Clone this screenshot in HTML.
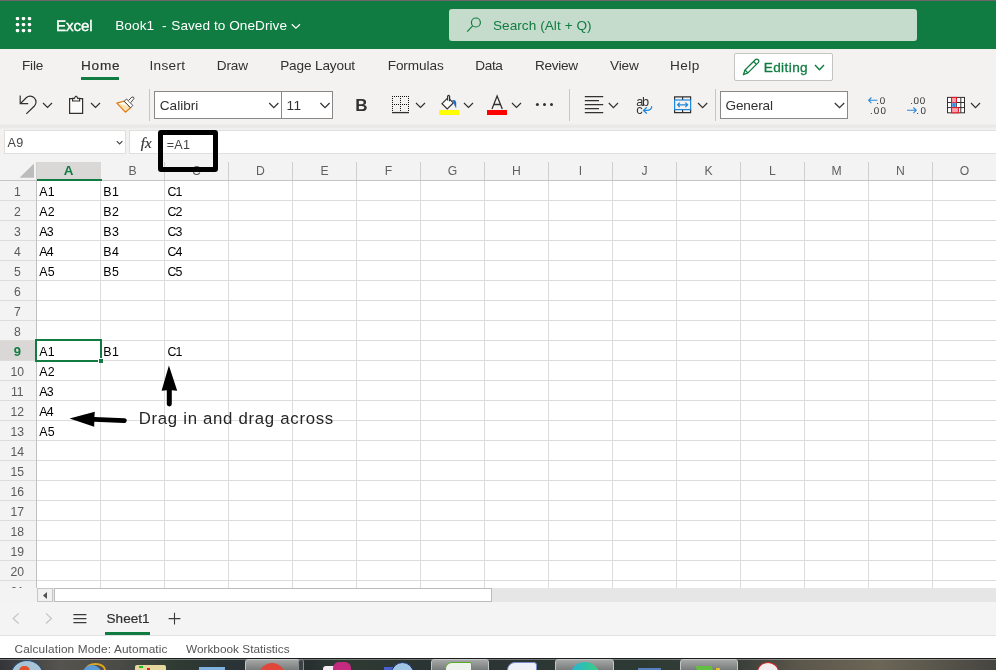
<!DOCTYPE html>
<html lang="en">
<head>
<meta charset="utf-8">
<title>Book1.xlsx - Excel</title>
<style>
html,body{margin:0;padding:0}
body{width:996px;height:670px;overflow:hidden;position:relative;background:#f3f2f1;font-family:"Liberation Sans",sans-serif;color:#323130}
.a{position:absolute}
.gl{position:absolute;left:0;top:0;width:996px;height:670px;will-change:transform}
.cells{position:absolute;left:0;top:0}
.t{position:absolute;white-space:pre;line-height:1;color:#323130}
#topline{left:0;top:0;width:996px;height:1px;background:#70656b}
#header{left:0;top:1px;width:996px;height:48px;background:#107c41}
#search{left:449px;top:9px;width:468px;height:32px;background:#c5dccd;border-radius:3px}
#ribbon{left:0;top:49px;width:996px;height:76px;background:#f3f2f1}
#ribshadow{left:0;top:124px;width:996px;height:6px;background:linear-gradient(#f1f0ef,#e7e6e5 35%,#eeedec 70%,#f3f3f3)}
#homeul{left:81px;top:77px;width:38px;height:3px;background:#107c41}
#editbtn{left:734px;top:53px;width:97px;height:26px;background:#fff;border:1px solid #c6c4c2;border-radius:2px}
.sep{width:1px;background:#c8c6c4;top:89px;height:32px}
.box{background:#fff;border:1px solid #8a8886;box-sizing:border-box}
#namebox{left:4px;top:130px;width:122px;height:24px;background:#fff;border:1px solid #e1dfdd;box-sizing:border-box}
#fxbox{left:129px;top:130px;width:870px;height:24px;background:#fff;border:1px solid #e1dfdd;box-sizing:border-box}
#colhdr{left:0;top:154px;width:996px;height:26px;background:#f3f3f3}
#colhdr i{position:absolute;top:8px;width:1px;height:18px;background:#cfcfcf}
#colA{left:37px;top:162px;width:64px;height:17px;background:#d9d8d6}
#colAline{left:37px;top:179px;width:65px;height:2px;background:#107c41}
#hdrline{left:0;top:180px;width:996px;height:1px;background:#c6c6c6}
#rowhdr{left:0;top:181px;width:36px;height:407px;background-color:#f3f3f3;background-image:linear-gradient(transparent 19px,#dcdcdc 19px);background-size:100% 20px}
#row9{left:0;top:341px;width:36px;height:19px;background:#d9d8d6}
#rowline{left:36px;top:181px;width:1px;height:407px;background:#c0c0c0}
#grid{left:37px;top:181px;width:959px;height:407px;background-color:#fff;background-image:linear-gradient(transparent 19px,#dcdcdc 19px),linear-gradient(90deg,transparent 63px,#dcdcdc 63px);background-size:100% 20px,64px 100%}
#sel{left:35px;top:339px;width:63px;height:19px;border:2px solid #107c41}
#handle{left:98px;top:358px;width:4px;height:4px;background:#107c41;border:1px solid #fff;border-right:0;border-bottom:0}
#annbox{left:158px;top:130px;width:50px;height:32px;border:5px solid #000;border-radius:3px}
#hscroll{left:37px;top:588px;width:959px;height:14px;background:#e6e6e6}
#hsbtn{left:37px;top:588px;width:16px;height:14px;background:#f1f1f1;border:1px solid #c6c6c6;box-sizing:border-box}
#hsthumb{left:54px;top:588px;width:438px;height:14px;background:#fff;border:1px solid #bcbcbc;box-sizing:border-box}
#tabs{left:0;top:602px;width:996px;height:33px;background:#f4f4f4}
#tabul{left:105px;top:632px;width:45px;height:3px;background:#107c41}
#statline{left:0;top:635px;width:996px;height:1px;background:#e1e1e1}
#status{left:0;top:636px;width:996px;height:22px;background:#fff}
#taskbar{left:0;top:658px;width:996px;height:12px;overflow:hidden;background:linear-gradient(90deg,#34353a 0,#55544f 60px,#4a4a46 120px,#2f3b33 175px,#2a3236 240px,#27302f 310px,#303b33 340px,#2a3433 420px,#2c3534 500px,#2d3a34 640px,#3a3f3a 740px,#5c574b 800px,#6b6656 880px,#55524a 950px,#45443f 996px)}
#taskbar:before{content:"";position:absolute;left:0;top:0;width:996px;height:2px;background:linear-gradient(#1c1c1c 50%,rgba(255,255,255,.35) 50%)}
#taskbar i{position:absolute;display:block}
.tbb{top:1px;height:14px;border:1px solid #c2c5c6;border-radius:3px;background:linear-gradient(#a4a7a6,#6f7372);box-sizing:border-box}
svg{position:absolute;overflow:visible}
</style>
</head>
<body>
<div class="a" id="header"></div>
<div class="a" id="topline"></div>
<div class="a" id="search"></div>
<div class="a" id="ribbon"></div>
<div class="a" id="ribshadow"></div>
<div class="a" id="homeul"></div>
<div class="a" id="editbtn"></div>
<div class="a sep" style="left:149px"></div>
<div class="a sep" style="left:569px"></div>
<div class="a sep" style="left:715px"></div>
<div class="a box" style="left:154px;top:91px;width:128px;height:28px"></div>
<div class="a box" style="left:281px;top:91px;width:52px;height:28px"></div>
<div class="a box" style="left:720px;top:91px;width:128px;height:28px"></div>
<div class="a" id="namebox"></div>
<div class="a" id="fxbox"></div>
<div class="a" id="colhdr">
<i style="left:36px"></i><i style="left:100px"></i><i style="left:164px"></i><i style="left:228px"></i><i style="left:292px"></i><i style="left:356px"></i><i style="left:420px"></i><i style="left:484px"></i><i style="left:548px"></i><i style="left:612px"></i><i style="left:676px"></i><i style="left:740px"></i><i style="left:804px"></i><i style="left:868px"></i><i style="left:932px"></i>
</div>
<div class="a" id="colA"></div>
<div class="a" id="hdrline"></div>
<div class="a" id="colAline"></div>
<div class="a" id="rowhdr"></div>
<div class="a" id="row9"></div>
<div class="a" id="grid"></div>
<div class="a" id="rowline"></div>
<div class="a" id="hscroll"></div>
<div class="a" id="hsbtn"></div>
<div class="a" id="hsthumb"></div>
<div class="a" id="tabs"></div>
<div class="a" id="tabul"></div>
<div class="a" id="status"></div>
<div class="a" id="statline"></div>
<div class="a" id="taskbar">
<i class="tbb" style="left:245px;width:55px"></i><i class="tbb" style="left:298px;width:6px;background:#3a4044;border-color:#8a8d8e"></i>
<i class="tbb" style="left:431px;width:58px"></i>
<i class="tbb" style="left:555px;width:59px"></i>
<i class="tbb" style="left:680px;width:58px"></i>
<i style="left:10px;top:2px;width:34px;height:34px;border-radius:50%;background:#a9c3d6;border:1px solid #1d4f7a;box-sizing:border-box"></i>
<i style="left:19px;top:8px;width:11px;height:10px;border-radius:5px 5px 0 0;background:#e2502a"></i>
<i style="left:85px;top:5px;width:21px;height:14px;border-radius:50%;border:2px solid #e0a820;box-sizing:border-box"></i>
<i style="left:82px;top:7px;width:20px;height:20px;border-radius:50%;background:#5a9ad8"></i>
<i style="left:135px;top:7px;width:31px;height:10px;border-radius:2px;background:#e6d79c"></i>
<i style="left:139px;top:8px;width:4px;height:2px;background:#18c030"></i><i style="left:147px;top:10px;width:3px;height:2px;background:#d82818"></i>
<i style="left:199px;top:9px;width:26px;height:6px;background:#7fb2e0"></i>
<i style="left:259px;top:5px;width:26px;height:26px;border-radius:50%;background:#e0473a"></i>
<i style="left:323px;top:8px;width:18px;height:8px;border-radius:3px;background:#f4eef2"></i>
<i style="left:333px;top:4px;width:18px;height:10px;border-radius:6px 6px 0 0;background:#c42a80"></i>
<i style="left:384px;top:9px;width:9px;height:5px;background:#4a5fd0"></i>
<i style="left:391px;top:4px;width:23px;height:23px;border-radius:50%;background:#9fc4e4;border:1px solid #1a2a6a;box-sizing:border-box"></i>
<i style="left:445px;top:4px;width:27px;height:14px;border-radius:7px 2px 0 0;background:#eef2ec;border:1px solid #5aaa2a;box-sizing:border-box"></i>
<i style="left:507px;top:4px;width:30px;height:14px;border-radius:8px 3px 0 0;background:#eef0f8;border:1px solid #7a8cc8;box-sizing:border-box"></i>
<i style="left:570px;top:4px;width:30px;height:30px;border-radius:50%;background:linear-gradient(90deg,#25b2dc,#3cd07a)"></i>
<i style="left:638px;top:10px;width:23px;height:4px;background:#5a7fc0"></i>
<i style="left:697px;top:8px;width:16px;height:8px;background:#62c040;transform:skewX(20deg)"></i><i style="left:716px;top:10px;width:4px;height:4px;background:#e8c020"></i>
<i style="left:757px;top:4px;width:22px;height:20px;border-radius:50%;background:#f2eeee;border:1px solid #d02020;box-sizing:border-box"></i>
</div>
<div class="gl">
<span class="t" style="left:56.0px;top:19px;font-size:15.2px;-webkit-text-stroke:0.35px currentColor;color:#fff;letter-spacing:-0.11px;text-rendering:geometricPrecision;">Excel</span>
<span class="t" style="left:115.2px;top:19px;font-size:13.6px;color:#fff;letter-spacing:0.11px;">Book1</span>
<span class="t" style="left:161.9px;top:19px;font-size:13.6px;color:#fff;">-</span>
<span class="t" style="left:171.3px;top:19px;font-size:13.6px;color:#fff;letter-spacing:0.05px;">Saved to OneDrive</span>
<span class="t" style="left:492.9px;top:19px;font-size:13.6px;color:#107c41;letter-spacing:0.06px;">Search (Alt + Q)</span>
<span class="t" style="left:22.0px;top:59px;font-size:13.6px;letter-spacing:-0.20px;">File</span>
<span class="t" style="left:80.9px;top:59px;font-size:13.6px;-webkit-text-stroke:0.2px currentColor;letter-spacing:0.84px;">Home</span>
<span class="t" style="left:149.4px;top:59px;font-size:13.6px;letter-spacing:0.34px;">Insert</span>
<span class="t" style="left:216.8px;top:59px;font-size:13.6px;letter-spacing:-0.18px;">Draw</span>
<span class="t" style="left:280.2px;top:59px;font-size:13.6px;letter-spacing:-0.14px;">Page Layout</span>
<span class="t" style="left:387.7px;top:59px;font-size:13.6px;letter-spacing:-0.09px;">Formulas</span>
<span class="t" style="left:475.3px;top:59px;font-size:13.6px;letter-spacing:-0.37px;">Data</span>
<span class="t" style="left:535.0px;top:59px;font-size:13.6px;letter-spacing:-0.32px;">Review</span>
<span class="t" style="left:610.0px;top:59px;font-size:13.6px;letter-spacing:-0.17px;">View</span>
<span class="t" style="left:670.1px;top:59px;font-size:13.6px;letter-spacing:0.38px;">Help</span>
<span class="t" style="left:763.7px;top:61px;font-size:13.6px;-webkit-text-stroke:0.3px currentColor;color:#107c41;letter-spacing:0.40px;">Editing</span>
<span class="t" style="left:159.8px;top:99px;font-size:13.6px;letter-spacing:-0.01px;">Calibri</span>
<span class="t" style="left:286.5px;top:99px;font-size:13.6px;letter-spacing:0.47px;">11</span>
<span class="t" style="left:355.2px;top:97px;font-size:17px;font-weight:700;">B</span>
<span class="t" style="left:725.5px;top:99px;font-size:13.6px;letter-spacing:-0.15px;">General</span>
<span class="t" style="left:7.5px;top:137px;font-size:12.6px;color:#444;letter-spacing:0.29px;">A9</span>
<span class="t" style="left:140.7px;top:136px;font-size:15px;-webkit-text-stroke:0.2px currentColor;font-style:italic;font-family:'Liberation Serif',serif;color:#333;letter-spacing:0.07px;">fx</span>
<span class="t" style="left:166.7px;top:139px;font-size:12.6px;color:#444;letter-spacing:0.32px;">=A1</span>
<span class="t" style="left:63.7px;top:164px;font-size:13.4px;font-weight:700;color:#107c41;">A</span>
<span class="t" style="left:128.4px;top:165px;font-size:12.2px;color:#616161;">B</span>
<span class="t" style="left:192.1px;top:165px;font-size:12.2px;color:#616161;">C</span>
<span class="t" style="left:256.1px;top:165px;font-size:12.2px;color:#616161;">D</span>
<span class="t" style="left:320.4px;top:165px;font-size:12.2px;color:#616161;">E</span>
<span class="t" style="left:384.8px;top:165px;font-size:12.2px;color:#616161;">F</span>
<span class="t" style="left:447.8px;top:165px;font-size:12.2px;color:#616161;">G</span>
<span class="t" style="left:512.1px;top:165px;font-size:12.2px;color:#616161;">H</span>
<span class="t" style="left:578.8px;top:165px;font-size:12.2px;color:#616161;">I</span>
<span class="t" style="left:641.5px;top:165px;font-size:12.2px;color:#616161;">J</span>
<span class="t" style="left:704.4px;top:165px;font-size:12.2px;color:#616161;">K</span>
<span class="t" style="left:769.1px;top:165px;font-size:12.2px;color:#616161;">L</span>
<span class="t" style="left:831.4px;top:165px;font-size:12.2px;color:#616161;">M</span>
<span class="t" style="left:896.1px;top:165px;font-size:12.2px;color:#616161;">N</span>
<span class="t" style="left:959.8px;top:165px;font-size:12.2px;color:#616161;">O</span>
<span class="t" style="left:13.9px;top:186px;font-size:12.2px;color:#5a5a5a;">1</span>
<span class="t" style="left:13.9px;top:206px;font-size:12.2px;color:#5a5a5a;">2</span>
<span class="t" style="left:13.9px;top:226px;font-size:12.2px;color:#5a5a5a;">3</span>
<span class="t" style="left:13.9px;top:246px;font-size:12.2px;color:#5a5a5a;">4</span>
<span class="t" style="left:13.9px;top:266px;font-size:12.2px;color:#5a5a5a;">5</span>
<span class="t" style="left:13.9px;top:286px;font-size:12.2px;color:#5a5a5a;">6</span>
<span class="t" style="left:13.9px;top:306px;font-size:12.2px;color:#5a5a5a;">7</span>
<span class="t" style="left:13.9px;top:326px;font-size:12.2px;color:#5a5a5a;">8</span>
<span class="t" style="left:13.7px;top:345px;font-size:13px;font-weight:700;color:#107c41;">9</span>
<span class="t" style="left:10.5px;top:366px;font-size:12.2px;color:#5a5a5a;">10</span>
<span class="t" style="left:11.0px;top:386px;font-size:12.2px;color:#5a5a5a;">11</span>
<span class="t" style="left:10.5px;top:406px;font-size:12.2px;color:#5a5a5a;">12</span>
<span class="t" style="left:10.5px;top:426px;font-size:12.2px;color:#5a5a5a;">13</span>
<span class="t" style="left:10.5px;top:446px;font-size:12.2px;color:#5a5a5a;">14</span>
<span class="t" style="left:10.5px;top:466px;font-size:12.2px;color:#5a5a5a;">15</span>
<span class="t" style="left:10.5px;top:486px;font-size:12.2px;color:#5a5a5a;">16</span>
<span class="t" style="left:10.5px;top:506px;font-size:12.2px;color:#5a5a5a;">17</span>
<span class="t" style="left:10.5px;top:526px;font-size:12.2px;color:#5a5a5a;">18</span>
<span class="t" style="left:10.5px;top:546px;font-size:12.2px;color:#5a5a5a;">19</span>
<span class="t" style="left:10.5px;top:566px;font-size:12.2px;color:#5a5a5a;">20</span>
<span class="t" style="left:10.5px;top:586px;font-size:12.2px;color:#5a5a5a;">21</span>
<span class="t" style="left:636.3px;top:96px;font-size:12.8px;letter-spacing:-1.33px;">ab</span>
<span class="t" style="left:636.3px;top:104px;font-size:12.8px;">c</span>
<span class="t" style="left:876.3px;top:97px;font-size:9.8px;letter-spacing:0.73px;text-rendering:geometricPrecision;">.0</span>
<span class="t" style="left:869.9px;top:107px;font-size:9.8px;letter-spacing:1.24px;text-rendering:geometricPrecision;">.00</span>
<span class="t" style="left:910.2px;top:97px;font-size:9.8px;letter-spacing:0.64px;text-rendering:geometricPrecision;">.00</span>
<span class="t" style="left:916.3px;top:107px;font-size:9.8px;letter-spacing:1.43px;text-rendering:geometricPrecision;">.0</span>
<span class="t" style="left:138.7px;top:411px;font-size:16.8px;color:#262626;letter-spacing:0.70px;">Drag in and drag across</span>
<span class="t" style="left:106.5px;top:612px;font-size:13.6px;-webkit-text-stroke:0.2px currentColor;">Sheet1</span>
<span class="t" style="left:14.5px;top:644px;font-size:11.8px;color:#555;letter-spacing:0.13px;">Calculation Mode: Automatic</span>
<span class="t" style="left:186.0px;top:644px;font-size:11.8px;color:#555;letter-spacing:0.01px;">Workbook Statistics</span>
</div>
<div class="cells">
<span class="t" style="left:39.3px;top:186px;font-size:12.4px;color:#000;letter-spacing:0.24px;">A1</span>
<span class="t" style="left:103.3px;top:186px;font-size:12.4px;color:#000;letter-spacing:0.44px;">B1</span>
<span class="t" style="left:167.5px;top:186px;font-size:12.4px;color:#000;letter-spacing:-0.84px;">C1</span>
<span class="t" style="left:39.3px;top:206px;font-size:12.4px;color:#000;letter-spacing:0.24px;">A2</span>
<span class="t" style="left:103.3px;top:206px;font-size:12.4px;color:#000;letter-spacing:0.44px;">B2</span>
<span class="t" style="left:167.5px;top:206px;font-size:12.4px;color:#000;letter-spacing:-0.84px;">C2</span>
<span class="t" style="left:39.3px;top:226px;font-size:12.4px;color:#000;letter-spacing:-0.76px;">A3</span>
<span class="t" style="left:103.3px;top:226px;font-size:12.4px;color:#000;letter-spacing:0.44px;">B3</span>
<span class="t" style="left:167.5px;top:226px;font-size:12.4px;color:#000;letter-spacing:-0.84px;">C3</span>
<span class="t" style="left:39.3px;top:246px;font-size:12.4px;color:#000;letter-spacing:-0.76px;">A4</span>
<span class="t" style="left:103.3px;top:246px;font-size:12.4px;color:#000;letter-spacing:0.44px;">B4</span>
<span class="t" style="left:167.5px;top:246px;font-size:12.4px;color:#000;letter-spacing:-0.84px;">C4</span>
<span class="t" style="left:39.3px;top:266px;font-size:12.4px;color:#000;letter-spacing:0.24px;">A5</span>
<span class="t" style="left:103.3px;top:266px;font-size:12.4px;color:#000;letter-spacing:0.44px;">B5</span>
<span class="t" style="left:167.5px;top:266px;font-size:12.4px;color:#000;letter-spacing:-0.84px;">C5</span>
<span class="t" style="left:39.3px;top:346px;font-size:12.4px;color:#000;letter-spacing:0.24px;">A1</span>
<span class="t" style="left:103.3px;top:346px;font-size:12.4px;color:#000;letter-spacing:0.44px;">B1</span>
<span class="t" style="left:167.5px;top:346px;font-size:12.4px;color:#000;letter-spacing:-0.84px;">C1</span>
<span class="t" style="left:39.3px;top:366px;font-size:12.4px;color:#000;letter-spacing:0.24px;">A2</span>
<span class="t" style="left:39.3px;top:386px;font-size:12.4px;color:#000;letter-spacing:-0.76px;">A3</span>
<span class="t" style="left:39.3px;top:406px;font-size:12.4px;color:#000;letter-spacing:-0.76px;">A4</span>
<span class="t" style="left:39.3px;top:426px;font-size:12.4px;color:#000;letter-spacing:0.24px;">A5</span>
</div>
<div class="a" style="left:0;top:588px;width:37px;height:14px;background:#f3f3f3"></div>
<div class="a" id="sel"></div>
<div class="a" id="handle"></div>
<svg class="a" style="left:0;top:0" width="996" height="670" viewBox="0 0 996 670" fill="none" stroke-linecap="butt" stroke-linejoin="miter">
<!-- waffle -->
<g fill="#fff">
<rect x="15.7" y="17" width="3.6" height="3.2" rx="1.4"/><rect x="21.7" y="17" width="3.6" height="3.2" rx="1.4"/><rect x="27.7" y="17" width="3.6" height="3.2" rx="1.4"/>
<rect x="15.7" y="23" width="3.6" height="3.2" rx="1.4"/><rect x="21.7" y="23" width="3.6" height="3.2" rx="1.4"/><rect x="27.7" y="23" width="3.6" height="3.2" rx="1.4"/>
<rect x="15.7" y="29" width="3.6" height="3.2" rx="1.4"/><rect x="21.7" y="29" width="3.6" height="3.2" rx="1.4"/><rect x="27.7" y="29" width="3.6" height="3.2" rx="1.4"/>
</g>
<!-- title chevron -->
<path d="M291.8 24.2 L295.9 28.2 L300 24.2" stroke="#fff" stroke-width="1.2"/>
<!-- search icon -->
<g stroke="#107c41" stroke-width="1.2"><circle cx="475.9" cy="22.5" r="4.5"/><path d="M472.6 25.9 L467.2 31.6"/></g>
<!-- editing pencil + chevron -->
<g stroke="#107c41" stroke-width="1.3" stroke-linejoin="round">
<path d="M743.4 74.7 L745 70 L755.3 59.7 A2.05 2.05 0 0 1 758.2 62.6 L747.9 72.9 Z"/>
<path d="M745 70 L747.9 72.9 M753.5 61.5 L756.4 64.4"/>
<path d="M815 65 L819.5 69.7 L824 65" stroke-width="1.4"/>
</g>
<!-- toolbar icons -->
<g stroke="#323130" stroke-width="1.2">
<!-- undo -->
<path d="M20.2 95.6 V103.7 H28.2"/>
<path d="M20.5 103.5 L26.2 97.8 A5.8 5.8 0 0 1 34.4 106 L26.3 113.9"/>
<!-- chevrons -->
<path d="M43 103 L47.5 107.5 L52 103"/>
<path d="M91 103 L95.5 107.5 L100 103"/>
<path d="M269.2 103 L273.8 107.6 L278.4 103"/>
<path d="M320.4 103 L325 107.6 L329.6 103"/>
<path d="M416 103 L420.5 107.5 L425 103"/>
<path d="M464 103 L468.5 107.5 L473 103"/>
<path d="M512 103 L516.5 107.5 L521 103"/>
<path d="M608.8 103 L613.4 107.6 L618 103"/>
<path d="M698 103 L702.6 107.6 L707.2 103"/>
<path d="M834.8 103 L839.5 107.7 L844.2 103"/>
<path d="M971 103 L975.5 107.6 L980 103"/>
<!-- clipboard -->
<path d="M69.6 98.6 H82.6 V113.4 H69.6 Z" fill="#fbfbfb"/>
<path d="M72.6 101 V98.4 H74.4 Q76.1 93.8 77.8 98.4 H79.6 V101 Z" fill="#f3f2f1"/>
<!-- borders -->
<path d="M392 112.6 H409" stroke-width="1.3"/>
<g stroke-width="1" stroke-dasharray="1 1" stroke="#111">
<path d="M392 96.5 H409 M392 104.5 H409"/>
<path d="M392.5 96 V111 M400.5 96 V111 M408.5 96 V111"/>
</g>
<!-- bucket -->
<path d="M447.3 98.3 L442 103.7 L447.2 108.9 L453.3 102.9 L449.6 99.2" fill="#fbfbfb"/>
<path d="M447.6 100.6 V96.2 Q448.6 94.6 449.6 96.2 V101.2" />
<!-- font color A -->
<path d="M492 108.9 L497.1 96 L502.3 108.9 M493.8 104.5 H500.5" stroke-width="1.3"/>
<!-- align -->
<path d="M584.8 96.7 H603.2 M584.8 100.7 H599 M584.8 104.7 H603.2 M584.8 108.7 H599 M584.8 112.7 H603.2"/>
<!-- merge -->
<path d="M674.6 100 V96.9 H690.6 V100 M674.6 109.6 V112.6 H690.6 V109.6 M682.6 96.9 V100 M682.6 109.6 V112.6"/>
</g>
<!-- dots -->
<g fill="#323130"><circle cx="537.4" cy="104.5" r="1.5"/><circle cx="544.5" cy="104.5" r="1.5"/><circle cx="551.5" cy="104.5" r="1.5"/></g>
<!-- yellow / red bars -->
<rect x="439" y="110" width="20" height="5" fill="#ffff00"/>
<rect x="487" y="110" width="20" height="5" fill="#ff0000"/>
<!-- bucket drop -->
<path d="M451.6 100.6 Q455.4 98.6 456.2 102.4 L456.2 108.4 Q453.6 105 454 102.6 Q453.2 101 451.6 100.6 Z" fill="#1b6ac2"/>
<!-- format painter -->
<g stroke-linejoin="round">
<path d="M116.8 103.2 L124.2 101.2 L130.6 107.8 L125.4 112.2 Z" fill="#fde3b5" stroke="#e07b12" stroke-width="1.2"/>
<path d="M118.6 103.4 L124 102 L128.6 106.6 Z" fill="#fff8ee"/>
<path d="M124.2 101.2 L126.6 99 L132.8 105.4 L130.6 107.8 Z" fill="#fff" stroke="#4a4a4a" stroke-width="1"/>
<path d="M128.4 100.6 L132 97 Q133.6 96.4 134 98.4 L130.6 102.8" fill="#fff" stroke="#4a4a4a" stroke-width="1"/>
</g>
<!-- merge middle blue -->
<g stroke="#1e88dc" stroke-width="1.2">
<rect x="674.6" y="100" width="16" height="9.6"/>
<path d="M677.6 104.8 H687.6 M679.8 102.6 L677.6 104.8 L679.8 107 M685.4 102.6 L687.6 104.8 L685.4 107"/>
</g>
<!-- wrap text -->
<path d="M651.7 106.2 Q651.9 110.4 646.5 110.4 H643.8 M646.8 107.3 L643.5 110.4 L646.8 113.5" stroke="#1e88dc" stroke-width="1.3"/>
<!-- decimals -->
<g stroke="#2b88d8" stroke-width="1.1">
<path d="M877.4 100.3 H868.6 M871.4 97.5 L868.6 100.3 L871.4 103.1"/>
<path d="M907 110.3 H916.2 M913.4 107.5 L916.2 110.3 L913.4 113.1"/>
</g>
<!-- conditional formatting -->
<g>
<rect x="947.5" y="97.4" width="17" height="15.4" fill="#fff" stroke="#323130" stroke-width="1"/>
<path d="M951.6 97.4 V112.8 M956.4 97.4 V112.8 M960.8 97.4 V112.8 M947.5 102.5 H964.5 M947.5 107.6 H964.5" stroke="#323130" stroke-width="1"/>
<rect x="951.6" y="97.4" width="4.8" height="5.1" fill="#f6a3ad" stroke="#e81123" stroke-width="1"/>
<rect x="952.1" y="103" width="3.8" height="4.1" fill="#3a8ee0" stroke="#7fb8ee" stroke-width=".6"/>
<rect x="951.6" y="107.6" width="6.8" height="5.2" fill="#f6a3ad" stroke="#e81123" stroke-width="1"/>
</g>
<!-- name box chevron -->
<path d="M116.8 141.2 L119.6 144 L122.4 141.2" stroke="#444" stroke-width="1.2"/>
<!-- corner triangle -->
<path d="M34 163.4 V177.8 H19.5 Z" fill="#bcbcbc"/>
<!-- annotation arrows -->
<g fill="#000" stroke="none">
<path d="M168.9 365.6 L177.2 390.8 L171.8 390.2 L171.8 404 Q171.8 406.4 169.3 406.4 Q166.8 406.4 166.8 404 L166.8 390.2 L161.6 390.8 Z"/>
<path d="M69.6 418.4 L94.8 411.8 L94.4 417 L124.4 418.2 Q126.9 418.4 126.7 420.8 Q126.5 423.2 124 423 L94.3 421.8 L94.2 426.8 Z"/>
</g>
<!-- scrollbar arrow -->
<path d="M47 592 V599 L43 595.5 Z" fill="#505050"/>
<!-- sheet nav -->
<g stroke="#c8c6c4" stroke-width="1.3">
<path d="M18.6 613.4 L13.2 618.6 L18.6 623.6"/>
<path d="M46 613.4 L51.4 618.6 L46 623.6"/>
</g>
<g stroke="#3b3a39" stroke-width="1.1">
<path d="M73.4 614.6 H86.4 M73.4 618.6 H86.4 M73.4 622.6 H86.4"/>
<path d="M168.6 618.6 H180.4 M174.5 612.8 V624.4"/>
</g>
</svg>

<div class="a" id="annbox"></div>
</body>
</html>
